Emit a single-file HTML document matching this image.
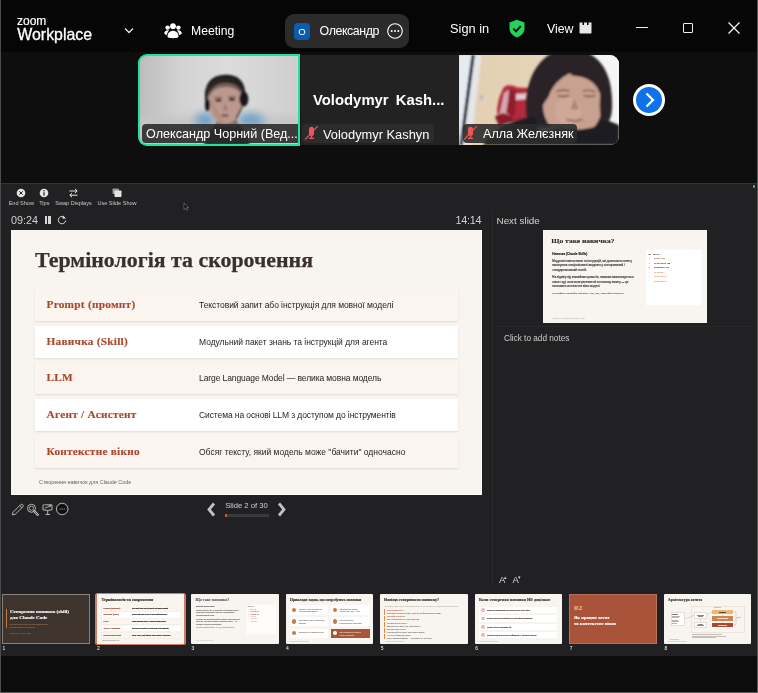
<!DOCTYPE html>
<html><head><meta charset="utf-8">
<style>
*{box-sizing:border-box;margin:0;padding:0}
html,body{width:758px;height:693px;overflow:hidden;background:#0b0b0b;font-family:"Liberation Sans",sans-serif;}
.abs{position:absolute}
#win{position:absolute;left:0;top:0;width:758px;height:693px;overflow:hidden;background:#0c0c0c;-webkit-font-smoothing:antialiased;will-change:transform;transform:translateZ(0)}
#tbar{left:0;top:0;width:758px;height:51.500px;background:#060606}
#strip{left:0;top:51.500px;width:758px;height:131.500px;background:#0e0e0e}
#pres{left:1px;top:183px;width:756px;height:473.500px;background:#212123;border-top:1px solid #343436;border-bottom:1px solid #2c2c2e}
#bot{left:0;top:656px;width:758px;height:38px;background:#0c0c0c}
.t{position:absolute;white-space:nowrap;color:#fff}
.serif{font-family:"Liberation Serif",serif}
</style></head><body>
<div id="win">
<div id="tbar" class="abs"></div>
<div id="strip" class="abs"></div>
<div id="pres" class="abs"></div>
<div id="bot" class="abs"></div>
<div class="abs" style="left:0;top:0;width:1.300px;height:693px;background:#4c4c4c"></div>
<div class="abs" style="left:757px;top:0;width:1px;height:693px;background:#5a5a5a"></div>
<div class="abs" style="left:0;top:691.500px;width:758px;height:1.500px;background:#5c5c5c"></div>
<!--TITLEBAR-->
<div class="t" style="left:17px;top:14.600px;font-size:12px;line-height:12px;-webkit-text-stroke:0.200px #fff">zoom</div>
<div class="t" id="wp" style="left:17.300px;top:26.400px;font-size:15.900px;line-height:18px;font-weight:400;-webkit-text-stroke:0.3px #fff">Workplace</div>
<svg class="abs" style="left:122px;top:24.700px" width="14" height="12" viewBox="0 0 14 12"><path d="M3 3.5 L7 7.5 L11 3.5" fill="none" stroke="#e8e8e8" stroke-width="1.3"/></svg>
<svg class="abs" style="left:163px;top:20px" width="20" height="20" viewBox="0 0 20 20" fill="#fff"><circle cx="10" cy="6.2" r="2.9"/><circle cx="4.6" cy="7.6" r="2.2"/><circle cx="15.4" cy="7.6" r="2.2"/><path d="M4.5 17c0-4 2.3-6.2 5.5-6.2s5.500 2.200 5.500 6.200c-2 1.600-9 1.600-11 0z"/><path d="M1.300 13.800c0-2.300 1.400-3.600 3.300-3.600 0.600 0 1.100 0.100 1.600 0.400-1.300 1-2 2.500-2.200 4.400-1.100-0.200-2.100-0.600-2.700-1.200z"/><path d="M18.700 13.800c0-2.300-1.400-3.600-3.300-3.600-0.600 0-1.100 0.100-1.600 0.400 1.300 1 2 2.500 2.200 4.400 1.100-0.200 2.100-0.600 2.700-1.200z"/></svg>
<div class="t" id="mt" style="left:191px;top:22.700px;font-size:12.2px;line-height:16px">Meeting</div>
<div class="abs" style="left:285px;top:14px;width:124px;height:34px;border-radius:9px;background:#2b2b2b"></div>
<div class="abs" style="left:294px;top:23.300px;width:16px;height:16.400px;border-radius:4px;background:#0b5cad"></div>
<div class="t" style="left:294px;top:24.200px;width:16px;text-align:center;font-size:9.600px;line-height:15px">O</div>
<div class="t" id="ol" style="left:319.600px;top:22.700px;font-size:12.4px;letter-spacing:-0.42px;line-height:16px">Олександр</div>
<svg class="abs" style="left:386px;top:22px" width="18" height="18" viewBox="0 0 18 18"><circle cx="9" cy="9" r="7.300" fill="none" stroke="#fff" stroke-width="1.1"/><circle cx="5.700" cy="9" r="1" fill="#fff"/><circle cx="9" cy="9" r="1" fill="#fff"/><circle cx="12.300" cy="9" r="1" fill="#fff"/></svg>
<div class="t" style="left:450px;top:21px;font-size:12.800px;line-height:16px">Sign in</div>
<svg class="abs" style="left:508px;top:19px" width="18" height="19" viewBox="0 0 18 19"><path d="M9 0.800 L16.500 3.600 V9.500 C16.500 13.800 13.300 17 9 18.400 C4.700 17 1.500 13.800 1.500 9.500 V3.600 Z" fill="#23d25c"/><path d="M5.300 9.600 L8 12.300 L12.800 7" fill="none" stroke="#0a0a0a" stroke-width="1.900"/></svg>
<div class="t" style="left:547px;top:21px;font-size:12.300px;line-height:16px">View</div>
<svg class="abs" style="left:579px;top:22px" width="13" height="12" viewBox="0 0 13 12" fill="#e6e6e6"><rect x="0.500" y="0.500" width="3" height="3"/><rect x="5" y="0.500" width="3" height="3"/><rect x="9.500" y="0.500" width="3" height="3"/><rect x="0.500" y="3" width="12" height="8.500" rx="0.800"/></svg>
<div class="abs" style="left:636px;top:27.300px;width:12px;height:1.200px;background:#f0f0f0"></div>
<div class="abs" style="left:683px;top:23px;width:10px;height:10px;border:1.400px solid #f0f0f0;border-radius:1px"></div>
<svg class="abs" style="left:727px;top:21px" width="14" height="14" viewBox="0 0 14 14"><path d="M1.500 1.500 L12.500 12.500 M12.500 1.500 L1.500 12.500" stroke="#f0f0f0" stroke-width="1.300"/></svg>
<!--/TITLEBAR-->
<!--GALLERY-->
<!-- tile 1 -->
<div class="abs" style="left:138px;top:54px;width:162.300px;height:92px;border-radius:9px 0 0 9px;background:#1fe598"></div>
<svg class="abs" style="left:140px;top:56px;border-radius:7px 0 0 7px" width="158.300" height="88" viewBox="2 2 158.300 88">
<defs>
<linearGradient id="g1" x1="0" x2="1" y1="0" y2="0"><stop offset="0" stop-color="#bdbbbb"/><stop offset="0.25" stop-color="#d3d2d2"/><stop offset="0.55" stop-color="#dddcdc"/><stop offset="1" stop-color="#cfcece"/></linearGradient>
<filter id="b1" x="-20%" y="-20%" width="140%" height="140%"><feGaussianBlur stdDeviation="1.1"/></filter>
<filter id="b3" x="-30%" y="-50%" width="160%" height="200%"><feGaussianBlur stdDeviation="4"/></filter>
</defs>
<rect x="0" y="0" width="163" height="92" fill="url(#g1)"/>
<rect x="0" y="62" width="163" height="30" fill="#c4c6c8" filter="url(#b3)"/>
<ellipse cx="67" cy="66" rx="10" ry="7" fill="#6b9fc6" filter="url(#b3)"/>
<ellipse cx="113" cy="66" rx="13" ry="7" fill="#6fa3c8" filter="url(#b3)"/>
<g filter="url(#b1)">
<path d="M66 92 C68 78 76 69 88 67 C100 66 108 74 112 92 Z" fill="#35353a"/>
<path d="M78 60 L98 60 L100 72 L78 72 Z" fill="#8f6e63"/>
<ellipse cx="87" cy="46.500" rx="17.800" ry="23.500" fill="#bd998d"/>
<path d="M72 40 C74 58 80 68 87 69.500 C82 62 76 52 72 40 Z" fill="#a88378" opacity="0.6"/>
<path d="M69.500 46 C67.500 30 76 23 88 23 C99 23 106 29 104.500 43 C101 35.500 96 33 87.500 33 C78 33 73 37 69.500 46 Z" fill="#3a2e2b" opacity="0.55"/>
<path d="M70 42 C69 29 77 23 88 23 C98 23 105 28 104.500 39 C100 31 95 29 87.500 29 C79 29 73 33 70 42 Z" fill="#2c2422"/>
<path d="M76 43.500 L84 43.200" stroke="#5a4038" stroke-width="1.100"/><path d="M90.500 43 L98 42.500" stroke="#5a4038" stroke-width="1.100"/>
<ellipse cx="80.500" cy="46.300" rx="3.300" ry="1.500" fill="#3a2622"/><ellipse cx="94" cy="45.600" rx="3.300" ry="1.500" fill="#3a2622"/>
<ellipse cx="87" cy="61.500" rx="4" ry="1.300" fill="#7e4e48"/>
<path d="M87 48 L85 56.500 L90 56.500 Z" fill="#a47c6c"/>
<path d="M69 50 C65 29 76 21.500 89 22 C99 22.500 105.500 28 106 40" fill="none" stroke="#121214" stroke-width="2.500"/>
<ellipse cx="105.800" cy="45" rx="4.600" ry="7.500" fill="#18181a"/>
<ellipse cx="69.500" cy="51" rx="2.600" ry="6.500" fill="#18181a"/>
<path d="M104.500 52 L100 61 L98 64" fill="none" stroke="#18181a" stroke-width="1.400"/>
</g>
</svg>
<div class="abs" style="left:142px;top:124px;width:156.300px;height:19px;border-radius:4px 0 0 4px;background:rgba(40,40,40,0.88)"></div>
<div class="t" id="n1" style="left:146px;top:125.500px;font-size:12.6px;line-height:17px">Олександр Чорний (Вед...</div>
<!-- tile 2 -->
<div class="abs" style="left:301px;top:55px;width:158px;height:90px;background:#222222"></div>
<div class="t" id="vk" style="left:313px;top:90.700px;font-size:14.850px;line-height:18px;font-weight:700;word-spacing:3px">Volodymyr Kash...</div>
<div class="abs" style="left:302px;top:124px;width:132px;height:19px;border-radius:4px;background:#2c2c2c"></div>
<svg class="abs mic" style="left:305px;top:126px" width="14" height="15" viewBox="0 0 14 15"><rect x="4" y="0.700" width="5" height="9.300" rx="2.500" fill="#ee5558"/><rect x="5.700" y="9.500" width="1.600" height="2.500" fill="#ee5558"/><rect x="3.800" y="11.700" width="5.400" height="1.400" rx="0.600" fill="#ee5558"/><path d="M12.800 0.200 L0 13.600" stroke="#ee5558" stroke-width="1.200"/></svg>
<div class="t" id="n2" style="left:323px;top:125.500px;font-size:12.850px;line-height:17px">Volodymyr Kashyn</div>
<!-- tile 3 -->
<svg class="abs" style="left:459px;top:55px;border-radius:0 9px 9px 0" width="160" height="90" viewBox="0 0 160 90">
<defs>
<filter id="c1" x="-20%" y="-20%" width="140%" height="140%"><feGaussianBlur stdDeviation="1.100"/></filter>
<filter id="c2" x="-30%" y="-30%" width="160%" height="160%"><feGaussianBlur stdDeviation="2.500"/></filter>
<linearGradient id="wg" x1="0" x2="1"><stop offset="0" stop-color="#e2cfb2"/><stop offset="1" stop-color="#ead9bd"/></linearGradient>
</defs>
<rect width="160" height="90" fill="url(#wg)"/>
<rect x="122" y="0" width="38" height="72" fill="#f5f5f5"/>
<g filter="url(#c1)">
<path d="M0 0 H13 L1 90 H0 Z" fill="#e6ecf4"/>
<path d="M12.500 0 H16 L4 90 H0.500 Z" fill="#182040"/>
<path d="M16 0 H22.500 L12 90 H4 Z" fill="#e4e6ea"/>
<path d="M21 40 h3 v5 h-3z" fill="#b8bcc4"/>
<path d="M43 36 C45 29 52 29 58 32.500 L72 33 L76 40 L76 64 L58 67 L40 67 C36 60 39 44 43 36 Z" fill="#b32b3d"/>
<path d="M45 38 L51 34 L47 58 L40 62 Z" fill="#ddd4d8" opacity="0.750"/>
<path d="M57 39 L72 38 L72 44 L57 45 Z" fill="#ece4e6" opacity="0.850"/>
<path d="M50 34 L57 36 L56 60 L48 62 Z" fill="#8a1a2a" opacity="0.800"/>
<path d="M36 62 C42 55 52 57 55 66 L40 71 Z" fill="#8a1e2c"/>
<path d="M38 60 C42 57 46 57 50 60" stroke="#e8dcdc" stroke-width="1" fill="none" opacity="0.700"/>
</g>
<g filter="url(#c1)">
<path d="M70 72 C62 44 70 6 98 -4 C128 -12 150 6 152.500 38 C154 54 153 66 147 68 L120 72 Z" fill="#2b2327"/>
<path d="M0 90 L24 90 C34 74 52 64 76 62 L84 90 Z" fill="#1b1b23"/>
<path d="M136 66 C146 64 156 68 160 72 V90 H130 Z" fill="#1b1b23"/>
<ellipse cx="113.500" cy="50.500" rx="29.500" ry="32" fill="#c9a190"/>
<ellipse cx="109" cy="56" rx="13" ry="14" fill="#d3ab9a" opacity="0.700"/>
<path d="M84 50 C83 33 92 21 112 17.500 C101 23 93 31 90 41 C88 44 86 47 84 50 Z" fill="#2b2327"/><g transform="translate(4.5,0.5)">
<path d="M108 17.500 C122 15 136 22 139.500 40 C134 28 124 21 108 20 Z" fill="#2b2327"/>
<path d="M137 36 C142 46 142 58 138 66 C135.500 56 136 46 137 36 Z" fill="#2b2327"/>
<path d="M93 36 Q99 33.500 106 35.500" fill="none" stroke="#5e4038" stroke-width="1.100"/>
<path d="M119 35.500 Q126 33.500 132 36.500" fill="none" stroke="#5e4038" stroke-width="1.100"/>
<path d="M94 40 Q100 42 106 40" fill="none" stroke="#4e322c" stroke-width="1.300"/>
<path d="M120 40 Q126 42 132 40" fill="none" stroke="#4e322c" stroke-width="1.300"/>
<path d="M111 43 L107 54 L115.500 54 Z" fill="#b08472"/>
<path d="M103 64 Q111 66.500 119 64" fill="none" stroke="#8e4e4a" stroke-width="1.700"/></g>
<path d="M78 90 C84 74 98 72 112 74 C128 76 140 70 150 66 L160 70 V90 Z" fill="#1b1b23"/>
</g>
</svg>
<div class="abs" style="left:463px;top:124px;width:114px;height:19px;border-radius:4px;background:rgba(44,44,44,0.900)"></div>
<svg class="abs mic" style="left:464.200px;top:126px" width="14" height="15" viewBox="0 0 14 15"><rect x="4" y="0.700" width="5" height="9.300" rx="2.500" fill="#ee5558"/><rect x="5.700" y="9.500" width="1.600" height="2.500" fill="#ee5558"/><rect x="3.800" y="11.700" width="5.400" height="1.400" rx="0.600" fill="#ee5558"/><path d="M12.800 0.200 L0 13.600" stroke="#ee5558" stroke-width="1.200"/></svg>
<div class="t" id="n3" style="left:483px;top:125.500px;font-size:12.6px;line-height:17px">Алла Желєзняк</div>
<!-- arrow -->
<div class="abs" style="left:633px;top:84px;width:32px;height:32px;border-radius:16px;background:#fff"></div>
<div class="abs" style="left:636px;top:87px;width:26px;height:26px;border-radius:13px;background:#0e72ed"></div>
<svg class="abs" style="left:636px;top:87px" width="26" height="26" viewBox="0 0 26 26"><path d="M10.500 6.500 L17 13 L10.500 19.500" fill="none" stroke="#fff" stroke-width="2.200"/></svg>
<!--/GALLERY-->
<!--PRESENTER-->
<style>
.lb{position:absolute;white-space:nowrap;color:#c8c8c8;font-size:5.550px;line-height:7px;text-align:center;transform:translateX(-50%)}
.row{position:absolute;left:24px;width:423px;height:32px;box-shadow:0 1px 1.500px rgba(120,90,70,0.170)}
.term{position:absolute;left:11.5px;top:8px;font-family:"Liberation Serif",serif;font-weight:700;font-size:11.3px;letter-spacing:0.25px;line-height:14px;color:#a8492f;-webkit-text-stroke:0.150px #a8492f;white-space:nowrap}
.desc{position:absolute;left:164px;top:10px;font-size:8.500px;line-height:12px;color:#1e1e1e;white-space:nowrap}
</style>
<!-- toolbar -->
<svg class="abs" style="left:16px;top:188px" width="10" height="10" viewBox="0 0 10 10"><circle cx="5" cy="5" r="4.300" fill="#e4e4e4"/><path d="M3.300 3.300 L6.700 6.700 M6.700 3.300 L3.300 6.700" stroke="#222" stroke-width="1"/></svg>
<div class="lb" style="left:21.300px;top:199.600px">End Show</div>
<svg class="abs" style="left:39px;top:188px" width="10" height="10" viewBox="0 0 10 10"><circle cx="5" cy="5" r="4.300" fill="#e4e4e4"/><rect x="4.400" y="4.200" width="1.200" height="3.400" fill="#222"/><circle cx="5" cy="2.800" r="0.750" fill="#222"/></svg>
<div class="lb" style="left:44.300px;top:199.600px">Tips</div>
<svg class="abs" style="left:68px;top:188px" width="11" height="10" viewBox="0 0 11 10"><path d="M1.500 3 H9 M7 1 L9.200 3 L7 5 M9.500 7.200 H2 M4 5.200 L1.800 7.200 L4 9.200" fill="none" stroke="#e4e4e4" stroke-width="1"/></svg>
<div class="lb" style="left:73.500px;top:199.600px">Swap Displays</div>
<svg class="abs" style="left:112px;top:188px" width="10" height="10" viewBox="0 0 10 10"><rect x="0.500" y="0.500" width="6.500" height="5.500" rx="0.800" fill="#9a9a9a"/><rect x="2.500" y="2.500" width="7" height="6.500" rx="0.800" fill="#e4e4e4"/></svg>
<div class="lb" style="left:117px;top:199.600px">Use Slide Show</div>
<svg class="abs" style="left:183px;top:202px" width="7" height="9" viewBox="0 0 7 9"><path d="M1 1 L1 7.500 L2.600 6 L3.700 8.300 L4.600 7.900 L3.600 5.600 L5.600 5.500 Z" fill="#0a0a0a" stroke="#aaa" stroke-width="0.450"/></svg>
<div class="t" id="tm" style="left:11px;top:213px;font-size:10.800px;line-height:14px;color:#d2d2d2">09:24</div>
<div class="abs" style="left:44.500px;top:216px;width:2.300px;height:8px;background:#d8d8d8"></div>
<div class="abs" style="left:48.300px;top:216px;width:2.300px;height:8px;background:#d8d8d8"></div>
<svg class="abs" style="left:57px;top:215px" width="10" height="10" viewBox="0 0 10 10"><path d="M8.200 3.200 A3.700 3.700 0 1 0 8.700 5.500" fill="none" stroke="#d8d8d8" stroke-width="1"/><path d="M6.200 0.500 L8.700 3.500 L5.300 3.700 Z" fill="#d8d8d8"/></svg>
<div class="t" id="tm2" style="left:455.500px;top:213px;letter-spacing:-0.250px;font-size:10.800px;line-height:14px;color:#d2d2d2">14:14</div>
<div class="t" style="left:496.500px;top:214px;font-size:9.900px;line-height:14px;color:#d2d2d2">Next slide</div>
<!-- main slide -->
<div class="abs" id="slide" style="left:11px;top:230px;width:471px;height:265px;background:#f8f5f0;overflow:hidden;box-shadow:inset -1px -1px 0 #fff">
 <div class="abs serif" id="stitle" style="left:23.500px;top:18px;font-size:20.600px;line-height:24px;font-weight:700;color:#3b2f2b;-webkit-text-stroke:0.250px #3b2f2b;white-space:nowrap;transform-origin:0 50%;transform:scaleX(1.062)">Термінологія та скорочення</div>
 <div class="row" style="top:59px;background:#fcf4ef"><div class="term">Prompt (промпт)</div><div class="desc" style="letter-spacing:-0.06px">Текстовий запит або інструкція для мовної моделі</div></div>
 <div class="row" style="top:95.700px;background:#fff"><div class="term">Навичка (Skill)</div><div class="desc" style="letter-spacing:-0.035px">Модульний пакет знань та інструкцій для агента</div></div>
 <div class="row" style="top:132.400px;background:#fcf4ef"><div class="term">LLM</div><div class="desc" style="letter-spacing:-0.095px">Large Language Model — велика мовна модель</div></div>
 <div class="row" style="top:169.100px;background:#fff"><div class="term">Агент / Асистент</div><div class="desc" style="letter-spacing:-0.1px">Система на основі LLM з доступом до інструментів</div></div>
 <div class="row" style="top:205.800px;background:#fcf4ef"><div class="term">Контекстне вікно</div><div class="desc">Обсяг тексту, який модель може "бачити" одночасно</div></div>
 <div class="abs" style="left:28px;top:249px;font-size:5.400px;line-height:7px;color:#6a625c;white-space:nowrap">Створення навичок для Claude Code</div>
</div>
<!-- controls under slide -->
<svg class="abs" style="left:11px;top:503px" width="14" height="13" viewBox="0 0 14 13"><path d="M1.300 11.700 L2 9.300 L9.800 1.500 Q10.800 0.800 11.800 1.800 Q12.700 2.800 12 3.700 L4.200 11.300 Z M8.700 2.600 L11 4.800" fill="none" stroke="#d0d0d0" stroke-width="0.850"/></svg>
<svg class="abs" style="left:26px;top:503px" width="14" height="13" viewBox="0 0 14 13"><circle cx="5.500" cy="5.300" r="4" fill="none" stroke="#d0d0d0" stroke-width="0.850"/><circle cx="5.500" cy="5.300" r="2.100" fill="none" stroke="#d0d0d0" stroke-width="0.700"/><path d="M8.300 8.300 L11.700 11.700" stroke="#d0d0d0" stroke-width="2.300" stroke-linecap="round"/><path d="M8.600 8.600 L11.500 11.500" stroke="#222" stroke-width="0.800" stroke-linecap="round"/></svg>
<svg class="abs" style="left:42px;top:503px" width="12" height="13" viewBox="0 0 12 13"><path d="M1 1.800 H10 V6.800 Q5.500 8 1 6.800 Z M5.700 7.500 V11.300 M3.500 11.500 H8" fill="none" stroke="#d0d0d0" stroke-width="0.850"/><path d="M2.800 5.300 L8.500 2.700 M8.500 2.700 L6.800 2.700 M8.500 2.700 L8 4.300" fill="none" stroke="#d0d0d0" stroke-width="0.750"/><path d="M0.500 1.800 H2.500" stroke="#222" stroke-width="1" stroke-dasharray="0.700 0.700"/></svg>
<svg class="abs" style="left:55px;top:502px" width="14" height="14" viewBox="0 0 14 14"><circle cx="7.200" cy="7" r="5.800" fill="none" stroke="#d0d0d0" stroke-width="0.800"/><circle cx="7.200" cy="7" r="4.300" fill="#0e0e0e"/><circle cx="5.200" cy="7" r="0.600" fill="#d0d0d0"/><circle cx="7.200" cy="7" r="0.600" fill="#d0d0d0"/><circle cx="9.200" cy="7" r="0.600" fill="#d0d0d0"/></svg>
<svg class="abs" style="left:206px;top:502px" width="11" height="15" viewBox="0 0 11 15"><path d="M8 1.500 L3 7.500 L8 13.500" fill="none" stroke="#c2c2c2" stroke-width="2.800"/></svg>
<svg class="abs" style="left:276px;top:502px" width="11" height="15" viewBox="0 0 11 15"><path d="M3 1.500 L8 7.500 L3 13.500" fill="none" stroke="#c2c2c2" stroke-width="2.800"/></svg>
<div class="t" id="sn" style="left:246.500px;top:500px;font-size:7.700px;line-height:11px;color:#cfcfcf;transform:translateX(-50%)">Slide 2 of 30</div>
<div class="abs" style="left:224.500px;top:514px;width:44px;height:2.500px;background:#3a3a3c"></div>
<div class="abs" style="left:224.500px;top:514px;width:2px;height:2.500px;background:#d8542a"></div>
<!-- right panel -->
<div class="abs" style="left:492px;top:211px;width:1px;height:374px;background:#2a2a2c"></div>
<div class="abs" style="left:497px;top:326px;width:256px;height:1px;background:#29292b"></div>
<div class="t" style="left:504.300px;top:331.800px;font-size:9.300px;line-height:13px;color:#d0d0d0;transform-origin:0 50%;transform:scaleX(0.885)">Click to add notes</div>
<div class="t" style="left:499px;top:574px;font-size:9.500px;line-height:12px;color:#d6d6d6">A<span style="font-size:5px;position:relative;top:-4px;left:-1px">▴</span></div>
<div class="t" style="left:512.500px;top:574px;font-size:9.500px;line-height:12px;color:#d6d6d6">A<span style="font-size:5px;position:relative;top:-4px;left:-1px">▾</span></div>
<div class="abs" style="left:752.500px;top:185px;width:2.500px;height:2.500px;background:#3ecf4a;border-radius:1px"></div>
<!-- next slide -->
<div class="abs" id="nslide" style="left:543px;top:230px;width:163.500px;height:92.500px;background:#f8f5f0;overflow:hidden">
<!--NS--><div style="position:absolute;left:0;top:0;width:654px;height:370px;transform-origin:0 0;transform:scale(0.25)">
<div class="abs serif" style="left:33.20px;top:26.40px;font-size:28.20px;line-height:36.00px;font-weight:700;color:#2e2623;white-space:nowrap;-webkit-text-stroke:0.48px #2e2623;transform-origin:0 50%;transform:scaleX(1.065)">Що таке навичка?</div>
<div class="abs" style="left:37.20px;top:87.20px;font-size:12.40px;line-height:16.00px;font-weight:700;color:#111;-webkit-text-stroke:0.40px #111;white-space:nowrap">Навичка (Claude Skills)</div>
<div class="abs" style="left:37.20px;top:113.60px;width:344.00px;font-size:11.60px;line-height:18.20px;color:#333;-webkit-text-stroke:0.48px #333">Модульні пакети знань та інструкцій, які дозволяють агенту<br>виконувати спеціалізовані завдання у повторюваний і<br>стандартизований спосіб.</div>
<div class="abs" style="left:37.20px;top:180.00px;width:344.00px;font-size:11.60px;line-height:18.20px;color:#333;-webkit-text-stroke:0.48px #333">На відміну від звичайних промптів, навички завантажуються<br>лише тоді, коли вони релевантні поточному запиту — це<br>економить контекстне вікно моделі.</div>
<div class="abs serif" style="left:37.20px;top:245.20px;font-size:10.80px;line-height:16.00px;font-style:italic;color:#6a6058;-webkit-text-stroke:0.32px #6a6058;white-space:nowrap">Для роботи потрібна підписка: Pro, Max, Team або Enterprise.</div>
<div class="abs" style="left:412.00px;top:79.20px;width:222.00px;height:222.00px;background:#fff"></div>
<div class="abs" style="left:422.40px;top:89.20px;font-family:'Liberation Mono',monospace;font-size:9.00px;line-height:17.88px;color:#222;white-space:pre;font-weight:700">my-skill/
<span style="color:#b04a30">|-- SKILL.md</span>
|-- reference.md
|-- examples.md
<span style="color:#e0885a">|-- scripts/
|-- resources/
`-- templates/</span></div>
<div class="abs" style="left:37.20px;top:346.00px;font-size:7.60px;line-height:12.00px;color:#a09890;white-space:nowrap">Створення навичок для Claude Code</div>
</div></div>
<!--/PRESENTER-->
<!--THUMBS-->
<style>.th{position:absolute;top:594.3px;width:87.6px;height:49.3px;overflow:hidden;background:#f8f5f0;border-radius:1px}.tn{position:absolute;top:645.200px;font-size:4.900px;line-height:8px;color:#dcdcdc;-webkit-text-stroke-width:0.1px}.th .term{-webkit-text-stroke:0.9px #a8492f}.th .desc{-webkit-text-stroke:0.7px #1e1e1e}.th .stt{-webkit-text-stroke:1px #3b2f2b !important}.th .s{font-family:"Liberation Serif",serif;font-weight:700;position:absolute;white-space:nowrap;color:#2e2623}.ln{position:absolute;height:0.800px;background:#8a827c}.cd{position:absolute;background:#fff}</style>
<div class="tn" style="left:2.5px">1</div>
<div class="tn" style="left:97.0px">2</div>
<div class="tn" style="left:191.6px">3</div>
<div class="tn" style="left:286.1px">4</div>
<div class="tn" style="left:380.7px">5</div>
<div class="tn" style="left:475.2px">6</div>
<div class="tn" style="left:569.8px">7</div>
<div class="tn" style="left:664.4px">8</div>
<div class="th" style="left:2.0px;background:#3e332d;box-shadow:inset 0 0 0 0.7px #a89f98">
<div class="abs" style="left:4.300px;top:14.300px;width:0.900px;height:19.500px;background:#c47840"></div>
<div class="s" style="left:7.500px;top:14.700px;font-size:4.750px;line-height:5.800px;color:#fff;-webkit-text-stroke:0.12px #fff;transform-origin:0 50%;transform:scaleX(1.06)">Створення навичок (skill)<br>для Claude Code</div>
<div class="abs" style="left:7.500px;top:28.500px;font-size:1.900px;line-height:2.800px;color:#b88a64;white-space:nowrap">Практичний посібник для побудови власних<br>спеціалізованих інструментів</div>
<div class="abs" style="left:7.500px;top:37.300px;font-size:1.800px;line-height:2.600px;color:#8a7f78;white-space:nowrap">Олександр Чорний • 2025</div>
</div>
<div class="abs" style="left:95.1px;top:592.900px;width:90.500px;height:51.800px;border-radius:2.500px;background:#cf7a62"></div>
<div class="th" style="left:96.55px"><div style="position:absolute;left:0;top:0;width:471px;height:265px;transform-origin:0 0;transform:scale(0.18620)">
 <div class="abs serif stt"  style="left:23.500px;top:18px;font-size:20.600px;line-height:24px;font-weight:700;color:#3b2f2b;-webkit-text-stroke:0.250px #3b2f2b;white-space:nowrap;transform-origin:0 50%;transform:scaleX(1.062)">Термінологія та скорочення</div>
 <div class="row" style="top:59px;background:#fcf4ef"><div class="term">Prompt (промпт)</div><div class="desc" style="letter-spacing:-0.06px">Текстовий запит або інструкція для мовної моделі</div></div>
 <div class="row" style="top:95.700px;background:#fff"><div class="term">Навичка (Skill)</div><div class="desc" style="letter-spacing:-0.035px">Модульний пакет знань та інструкцій для агента</div></div>
 <div class="row" style="top:132.400px;background:#fcf4ef"><div class="term">LLM</div><div class="desc" style="letter-spacing:-0.095px">Large Language Model — велика мовна модель</div></div>
 <div class="row" style="top:169.100px;background:#fff"><div class="term">Агент / Асистент</div><div class="desc" style="letter-spacing:-0.1px">Система на основі LLM з доступом до інструментів</div></div>
 <div class="row" style="top:205.800px;background:#fcf4ef"><div class="term">Контекстне вікно</div><div class="desc">Обсяг тексту, який модель може "бачити" одночасно</div></div>
 <div class="abs" style="left:28px;top:249px;font-size:5.400px;line-height:7px;color:#6a625c;white-space:nowrap">Створення навичок для Claude Code</div>
</div></div>
<div class="th" style="left:191.1px"><div style="position:absolute;left:0;top:0;width:654px;height:370px;opacity:0.78;transform-origin:0 0;transform:scale(0.13410)">
<div class="abs serif" style="left:33.20px;top:26.40px;font-size:28.20px;line-height:36.00px;font-weight:700;color:#2e2623;white-space:nowrap;-webkit-text-stroke:0.48px #2e2623;transform-origin:0 50%;transform:scaleX(1.065)">Що таке навичка?</div>
<div class="abs" style="left:37.20px;top:87.20px;font-size:12.40px;line-height:16.00px;font-weight:700;color:#111;-webkit-text-stroke:0.40px #111;white-space:nowrap">Навичка (Claude Skills)</div>
<div class="abs" style="left:37.20px;top:113.60px;width:344.00px;font-size:11.60px;line-height:18.20px;color:#333;-webkit-text-stroke:0.48px #333">Модульні пакети знань та інструкцій, які дозволяють агенту<br>виконувати спеціалізовані завдання у повторюваний і<br>стандартизований спосіб.</div>
<div class="abs" style="left:37.20px;top:180.00px;width:344.00px;font-size:11.60px;line-height:18.20px;color:#333;-webkit-text-stroke:0.48px #333">На відміну від звичайних промптів, навички завантажуються<br>лише тоді, коли вони релевантні поточному запиту — це<br>економить контекстне вікно моделі.</div>
<div class="abs serif" style="left:37.20px;top:245.20px;font-size:10.80px;line-height:16.00px;font-style:italic;color:#6a6058;-webkit-text-stroke:0.32px #6a6058;white-space:nowrap">Для роботи потрібна підписка: Pro, Max, Team або Enterprise.</div>
<div class="abs" style="left:412.00px;top:79.20px;width:222.00px;height:222.00px;background:#fff"></div>
<div class="abs" style="left:422.40px;top:89.20px;font-family:'Liberation Mono',monospace;font-size:9.00px;line-height:17.88px;color:#222;white-space:pre;font-weight:700">my-skill/
<span style="color:#b04a30">|-- SKILL.md</span>
|-- reference.md
|-- examples.md
<span style="color:#e0885a">|-- scripts/
|-- resources/
`-- templates/</span></div>
<div class="abs" style="left:37.20px;top:346.00px;font-size:7.60px;line-height:12.00px;color:#a09890;white-space:nowrap">Створення навичок для Claude Code</div>
</div></div>
<div class="th" style="left:285.65px">
<div class="s" style="left:4.300px;top:2.600px;font-size:3.640px;line-height:6px;-webkit-text-stroke-width:0.1px;transform-origin:0 50%;transform:scaleX(1.04)">Приклади задач, що потребують навички</div>
<div class="cd" style="left:4.3px;top:10.8px;width:38.3px;height:10.0px;background:#fff"><div class="abs" style="left:2.200px;top:2.90px;width:4.200px;height:4.200px;border-radius:50%;background:#c9793f"></div><div class="abs" style="left:8.800px;top:2.70px;width:27px;font-size:1.900px;line-height:2.400px;color:#3a3330">Створення презентацій за стандартами компанії</div></div><div class="cd" style="left:45px;top:10.8px;width:39.5px;height:10.0px;background:#fff"><div class="abs" style="left:2.200px;top:2.90px;width:4.200px;height:4.200px;border-radius:50%;background:#c9793f"></div><div class="abs" style="left:8.800px;top:2.70px;width:27px;font-size:1.900px;line-height:2.400px;color:#3a3330">Оформлення тікетів і документів у JIRA, Wiki</div></div><div class="cd" style="left:4.3px;top:22.6px;width:38.3px;height:9.2px;background:#fff"><div class="abs" style="left:2.200px;top:2.50px;width:4.200px;height:4.200px;border-radius:50%;background:#c9793f"></div><div class="abs" style="left:8.800px;top:2.30px;width:27px;font-size:1.900px;line-height:2.400px;color:#3a3330">Підготовка звітів у потрібному форматі</div></div><div class="cd" style="left:45px;top:22.6px;width:39.5px;height:9.2px;background:#fff"><div class="abs" style="left:2.200px;top:2.50px;width:4.200px;height:4.200px;border-radius:50%;background:#c9793f"></div><div class="abs" style="left:8.800px;top:2.30px;width:27px;font-size:1.900px;line-height:2.400px;color:#3a3330">Структурування корпоративної бази знань</div></div><div class="cd" style="left:4.3px;top:34.3px;width:38.3px;height:9.6px;background:#fff"><div class="abs" style="left:2.200px;top:2.70px;width:4.200px;height:4.200px;border-radius:50%;background:#c9793f"></div><div class="abs" style="left:8.800px;top:2.50px;width:27px;font-size:1.900px;line-height:2.400px;color:#3a3330">Розгортання інфраструктури</div></div><div class="cd" style="left:45px;top:34.3px;width:39.5px;height:9.6px;background:#a8553a"><div class="abs" style="left:2.200px;top:2.70px;width:4.200px;height:4.200px;border-radius:50%;background:#fff"></div><div class="abs" style="left:8.800px;top:2.50px;width:27px;font-size:1.900px;line-height:2.400px;color:#fff">Спеціалізована обробка даних, аналітика</div></div>
<div class="ln" style="left:4.500px;top:46.700px;width:19px;height:0.400px;background:#ddd6ce"></div>
</div>
<div class="th" style="left:380.2px">
<div class="s" style="left:4.300px;top:2.600px;font-size:3.880px;line-height:6px;-webkit-text-stroke-width:0.1px;transform-origin:0 50%;transform:scaleX(1.04)">Навіщо створювати навичку?</div>
<div class="abs" style="left:4.300px;top:10.500px;font-size:1.750px;line-height:2.500px;color:#9a928c;white-space:nowrap">Проблема: навіть добре написаний промпт не дає стабільного і повторюваного результату</div>
<div class="abs" style="left:4.300px;top:15.2px;width:0.800px;height:5.200px;background:#d98a4a"></div><div class="s" style="left:6.500px;top:14.899999999999999px;font-size:2.300px;line-height:2.800px;color:#b0502f">Повторюваність</div><div class="abs" style="left:6.500px;top:17.8px;font-size:1.750px;line-height:2.500px;color:#2c2826;white-space:nowrap">однаковий результат щоразу, незалежно від формулювання запиту</div><div class="abs" style="left:4.300px;top:21.5px;width:0.800px;height:5.200px;background:#d98a4a"></div><div class="s" style="left:6.500px;top:21.2px;font-size:2.300px;line-height:2.800px;color:#b0502f">Передбачуваність</div><div class="abs" style="left:6.500px;top:24.1px;font-size:1.750px;line-height:2.500px;color:#2c2826;white-space:nowrap">агент діє відповідно до чітких інструкцій</div><div class="abs" style="left:4.300px;top:27.7px;width:0.800px;height:5.200px;background:#d98a4a"></div><div class="s" style="left:6.500px;top:27.4px;font-size:2.300px;line-height:2.800px;color:#b0502f">Економія контексту</div><div class="abs" style="left:6.500px;top:30.3px;font-size:1.750px;line-height:2.500px;color:#2c2826;white-space:nowrap">завантажується лише тоді, коли потрібно</div><div class="abs" style="left:4.300px;top:34px;width:0.800px;height:5.200px;background:#d98a4a"></div><div class="s" style="left:6.500px;top:33.7px;font-size:2.300px;line-height:2.800px;color:#b0502f">Розширення знань</div><div class="abs" style="left:6.500px;top:36.6px;font-size:1.750px;line-height:2.500px;color:#2c2826;white-space:nowrap">додає специфічні знання, яких немає в моделі</div><div class="abs" style="left:4.300px;top:40px;width:0.800px;height:5.200px;background:#d98a4a"></div><div class="s" style="left:6.500px;top:39.7px;font-size:2.300px;line-height:2.800px;color:#b0502f">Легке розповсюдження</div><div class="abs" style="left:6.500px;top:42.6px;font-size:1.750px;line-height:2.500px;color:#2c2826;white-space:nowrap">просто ділитися файлами — одна папка, усе всередині</div>
<div class="ln" style="left:4.500px;top:46.700px;width:19px;height:0.400px;background:#ddd6ce"></div>
</div>
<div class="th" style="left:474.75px">
<div class="s" style="left:4.300px;top:2.600px;font-size:3.970px;line-height:6px;-webkit-text-stroke-width:0.1px;transform-origin:0 50%;transform:scaleX(1.04)">Коли створення навички НЕ доцільне</div>
<div class="cd" style="left:4.300px;top:12.5px;width:78.400px;height:6.3px;box-shadow:0 0.3px 0.6px rgba(120,80,60,0.2)"><div class="abs" style="left:2.300px;top:1.45px;width:3.400px;height:3.400px;border-radius:50%;background:#efb8b8"></div><div class="abs" style="left:8px;top:1.85px;font-size:1.850px;line-height:2.600px;color:#3a3430;-webkit-text-stroke-width:0.1px;white-space:nowrap">Завдання одноразове або виконується дуже рідко</div></div><div class="cd" style="left:4.300px;top:20.8px;width:78.400px;height:6.5px;box-shadow:0 0.3px 0.6px rgba(120,80,60,0.2)"><div class="abs" style="left:2.300px;top:1.55px;width:3.400px;height:3.400px;border-radius:50%;background:#efb8b8"></div><div class="abs" style="left:8px;top:1.95px;font-size:1.850px;line-height:2.600px;color:#3a3430;-webkit-text-stroke-width:0.1px;white-space:nowrap">Задача вже добре вирішується звичайним промптом</div></div><div class="cd" style="left:4.300px;top:29.3px;width:78.400px;height:6.5px;box-shadow:0 0.3px 0.6px rgba(120,80,60,0.2)"><div class="abs" style="left:2.300px;top:1.55px;width:3.400px;height:3.400px;border-radius:50%;background:#efb8b8"></div><div class="abs" style="left:8px;top:1.95px;font-size:1.850px;line-height:2.600px;color:#3a3430;-webkit-text-stroke-width:0.1px;white-space:nowrap">Немає чіткого алгоритму дій</div></div><div class="cd" style="left:4.300px;top:37.6px;width:78.400px;height:6.3px;box-shadow:0 0.3px 0.6px rgba(120,80,60,0.2)"><div class="abs" style="left:2.300px;top:1.45px;width:3.400px;height:3.400px;border-radius:50%;background:#efb8b8"></div><div class="abs" style="left:8px;top:1.85px;font-size:1.850px;line-height:2.600px;color:#3a3430;-webkit-text-stroke-width:0.1px;white-space:nowrap">Потрібна повна актуальна інформація з зовнішніх джерел</div></div>
<div class="ln" style="left:4.500px;top:46.700px;width:19px;height:0.400px;background:#ddd6ce"></div>
</div>
<div class="th" style="left:569.3px;background:#a9543a;box-shadow:inset 0 0 0 0.6px #c98a74">
<div class="s" style="left:4.500px;top:10.600px;font-size:7px;line-height:7px;color:#ecbd68;-webkit-text-stroke-width:0.15px;transform-origin:0 50%;transform:scaleX(1.2)">02</div>
<div class="s" style="left:4.500px;top:21.100px;font-size:4.400px;line-height:5.900px;color:#fff;-webkit-text-stroke-width:0.12px;transform-origin:0 50%;transform:scaleX(1.06)">Як працює агент<br>та контекстне вікно</div>
</div>
<div class="th" style="left:663.85px">
<div class="s" style="left:4.500px;top:2.600px;font-size:3.740px;line-height:6px;-webkit-text-stroke-width:0.1px;transform-origin:0 50%;transform:scaleX(1.04)">Архітектура агента</div>
<div class="abs" style="left:27px;top:11.800px;width:53.700px;height:27px;border:0.250px solid #efe2da"></div>
<div class="cd" style="left:6.800px;top:18px;width:14.500px;height:13.300px;border:0.250px solid #e6ded6"></div>
<div class="ln" style="left:8px;top:19.500px;width:6px;height:0.450px;background:#777"></div>
<div class="ln" style="left:8px;top:21.500px;width:8px;height:0.350px;background:#b8b4b0"></div>
<div class="ln" style="left:8px;top:23px;width:7px;height:0.350px;background:#b8b4b0"></div>
<div class="ln" style="left:8px;top:25.500px;width:6px;height:0.350px;background:#b8b4b0"></div>
<div class="ln" style="left:8px;top:27px;width:7px;height:0.350px;background:#b8b4b0"></div>
<div class="ln" style="left:8px;top:28.500px;width:5px;height:0.350px;background:#b8b4b0"></div>
<div class="cd" style="left:29.700px;top:18.200px;width:13.900px;height:6.800px;border:0.250px solid #e6ded6"></div>
<div class="ln" style="left:33px;top:20.300px;width:7px;height:0.450px;background:#888"></div><div class="ln" style="left:34px;top:21.800px;width:5px;height:0.450px;background:#888"></div>
<div class="cd" style="left:29.700px;top:28px;width:13.900px;height:5.800px;border:0.250px solid #e6ded6"></div>
<div class="ln" style="left:34px;top:29.700px;width:5px;height:0.450px;background:#888"></div><div class="ln" style="left:33px;top:31.200px;width:7px;height:0.450px;background:#888"></div>
<div class="abs" style="left:48px;top:15.800px;width:21px;height:3.800px;background:#e9ba72"></div>
<div class="abs" style="left:48px;top:21.800px;width:21px;height:4.500px;background:#d2834f"></div>
<div class="abs" style="left:48px;top:28.800px;width:21px;height:3.800px;background:#a74a31"></div>
<div class="ln" style="left:55px;top:17.500px;width:7px;height:0.500px;background:#5a4020"></div>
<div class="ln" style="left:53px;top:23.800px;width:11px;height:0.500px;background:#f4d8c0"></div>
<div class="ln" style="left:54px;top:30.500px;width:9px;height:0.500px;background:#f0c8b8"></div>
<svg class="abs" style="left:0;top:0" width="88" height="49" viewBox="0 0 88 49"><path d="M21.300 25 L30 21.300 M42.600 21.300 L48 17.700 M36.300 24.300 V27.600 M58.500 19.600 V21.800 M58.500 26.300 V28.800 M69 17.700 H72 V30.700 H69 M72 24 H75" fill="none" stroke="#8a827c" stroke-width="0.250"/></svg>
<div class="ln" style="left:50px;top:13px;width:7px;height:0.300px;background:#c8c4c0"></div>
<div class="ln" style="left:73px;top:23px;width:4px;height:0.300px;background:#c8c4c0"></div>
<div class="ln" style="left:28px;top:40.200px;width:30px;height:0.300px;background:#c4bfba"></div>
<div class="ln" style="left:28px;top:41.700px;width:34px;height:0.300px;background:#c4bfba"></div>
<div class="ln" style="left:28px;top:43.200px;width:24px;height:0.300px;background:#c4bfba"></div>
<div class="ln" style="left:6px;top:44.800px;width:9px;height:0.300px;background:#dcc8be"></div>
<div class="ln" style="left:4.500px;top:46.700px;width:19px;height:0.400px;background:#ddd6ce"></div>
</div>
<!--/THUMBS-->
</div>
</body></html>
